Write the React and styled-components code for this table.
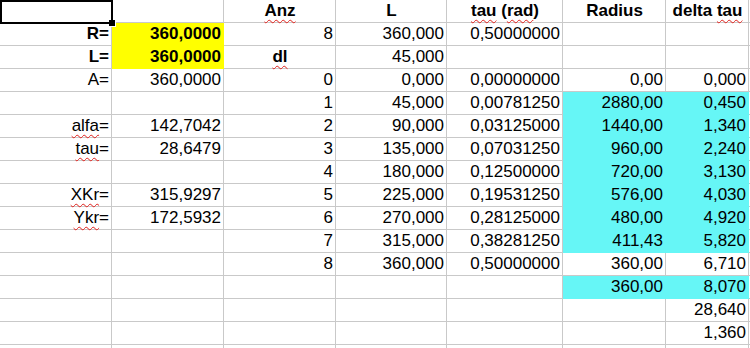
import React from 'react';
import styled, { createGlobalStyle } from 'styled-components';

const GlobalStyle = createGlobalStyle`
    html, body {
        margin: 0;
        padding: 0;
        background: #ffffff;
    }
    body {
        font-family: "Liberation Sans", Arial, sans-serif;
        overflow: hidden;
    }
`;

const Sheet = styled.div`
    display: grid;
    grid-template-columns: 112px 112px 112px 111px 116px 103px 83px 1fr;
    grid-auto-rows: 23px;
    width: 750px;
    height: 348px;
    overflow: hidden;
    font-size: 17px;
    color: #000;
`;

const Cell = styled.div`
    position: relative;
    box-sizing: border-box;
    display: flex;
    align-items: center;
    justify-content: ${p => (p.$center ? 'center' : 'flex-end')};
    padding: 0 2px 0 3px;
    line-height: 22px;
    white-space: nowrap;
    border-right: 1px solid ${p => (p.$fill ? p.$fill : '#c9c9c9')};
    border-bottom: 1px solid ${p => (p.$fill ? p.$fill : '#c9c9c9')};
    background: ${p => p.$fill || 'transparent'};
    font-weight: ${p => (p.$bold ? 700 : 400)};
`;

const Selected = styled(Cell)`
    &::before {
        content: '';
        position: absolute;
        left: 0;
        top: 0;
        width: 113px;
        height: 24px;
        box-sizing: border-box;
        border: 2px solid #000;
        z-index: 2;
    }
    &::after {
        content: '';
        position: absolute;
        left: 109px;
        top: 20px;
        width: 6px;
        height: 6px;
        background: #000;
        border: 1px solid #fff;
        border-top: none;
        border-left: none;
        z-index: 3;
    }
`;

const Squiggle = styled.span`
    text-decoration: underline wavy #e0201b;
    text-decoration-thickness: 1px;
    text-underline-offset: 3px;
    text-decoration-skip-ink: none;
`;

const YELLOW = '#ffff00';
const CYAN = '#66f6f6';

const rows = [
    [null, '', ['Anz', 'hs'], ['L', 'h'], ['tau (rad)', 'hs'], ['Radius', 'h'], ['delta tau', 'hs']],
    [['R=', 'b'], ['360,0000', 'by'], '8', '360,000', '0,50000000', '', ''],
    [['L=', 'b'], ['360,0000', 'by'], ['dl', 'hs'], '45,000', '', '', ''],
    ['A=', '360,0000', '0', '0,000', '0,00000000', '0,00', '0,000'],
    ['', '', '1', '45,000', '0,00781250', ['2880,00', 'c'], ['0,450', 'c']],
    [['alfa=', 'q'], '142,7042', '2', '90,000', '0,03125000', ['1440,00', 'c'], ['1,340', 'c']],
    [['tau=', 'q'], '28,6479', '3', '135,000', '0,07031250', ['960,00', 'c'], ['2,240', 'c']],
    ['', '', '4', '180,000', '0,12500000', ['720,00', 'c'], ['3,130', 'c']],
    [['XKr=', 'q'], '315,9297', '5', '225,000', '0,19531250', ['576,00', 'c'], ['4,030', 'c']],
    [['Ykr=', 'q'], '172,5932', '6', '270,000', '0,28125000', ['480,00', 'c'], ['4,920', 'c']],
    ['', '', '7', '315,000', '0,38281250', ['411,43', 'c'], ['5,820', 'c']],
    ['', '', '8', '360,000', '0,50000000', '360,00', '6,710'],
    ['', '', '', '', '', ['360,00', 'c'], ['8,070', 'c']],
    ['', '', '', '', '', '', '28,640'],
    ['', '', '', '', '', '', '1,360'],
    ['', '', '', '', '', '', ''],
];

const renderText = (text, flags) => {
    if (flags.includes('s') && text === 'delta tau') {
        return <span>delta <Squiggle>tau</Squiggle></span>;
    }
    if (flags.includes('s') && text === 'tau (rad)') {
        return <span><Squiggle>tau</Squiggle> (<Squiggle>rad</Squiggle>)</span>;
    }
    if (flags.includes('s') || flags.includes('q')) {
        const m = text.match(/^(.*?)(=?)$/);
        return <span><Squiggle>{m[1]}</Squiggle>{m[2]}</span>;
    }
    return text;
};

export default function App() {
    return (
        <>
            <GlobalStyle />
            <Sheet>
                {rows.map((row, r) => (
                    <React.Fragment key={r}>
                        {row.map((item, c) => {
                            if (item === null) return <Selected key={c} />;
                            const [text, flags] = Array.isArray(item) ? item : [item, ''];
                            const fill = flags.includes('y') ? YELLOW : flags.includes('c') ? CYAN : undefined;
                            return (
                                <Cell
                                    key={c}
                                    $center={flags.includes('h')}
                                    $bold={flags.includes('b') || flags.includes('h')}
                                    $fill={fill}
                                >
                                    {renderText(text, flags)}
                                </Cell>
                            );
                        })}
                        <Cell />
                    </React.Fragment>
                ))}
            </Sheet>
        </>
    );
}
